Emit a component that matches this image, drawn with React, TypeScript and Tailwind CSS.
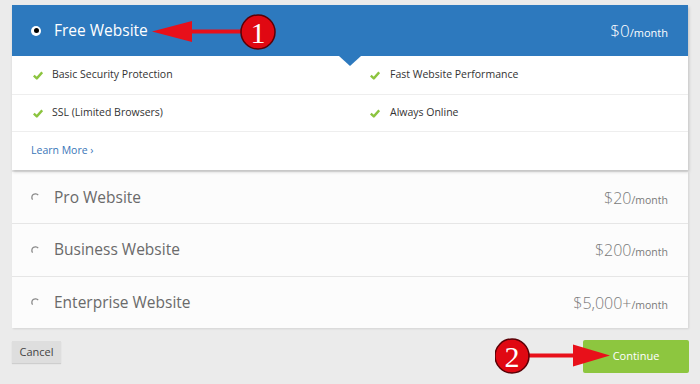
import React from 'react';

const FONT = { fontFamily: '"Open Sans", "Noto Sans", sans-serif' };

const Check: React.FC = () => (
  <svg width="10" height="9" viewBox="0 0 10 9" className="shrink-0">
    <path d="M0.8 4.6 L3.8 7.4 L9.2 1.4" fill="none" stroke="#8cc43f" strokeWidth="2.4" strokeLinejoin="round" />
  </svg>
);

const Radio: React.FC = () => (
  <svg width="9" height="9" viewBox="0 0 9 9" className="shrink-0">
    <path d="M7.2 2.2 A3.4 3.4 0 1 0 1.6 6.6" fill="none" stroke="#8a8a8a" strokeWidth="1.3" />
  </svg>
);

const Callout: React.FC<{ n: string; dir: 'left' | 'right'; className: string }> = ({ n, dir, className }) => (
  <svg width="140" height="40" viewBox="0 0 140 40" className={`absolute ${className}`}>
    {dir === 'left' ? (
      <g>
        <rect x="38" y="17.5" width="72" height="4" fill="#e8101a" />
        <polygon points="0,19.5 40,9 40,30" fill="#e8101a" />
        <circle cx="106" cy="20" r="17" fill="#e00812" stroke="#5a0006" strokeWidth="1.5" />
        <text x="106" y="31" textAnchor="middle" fill="#fff" fontSize="30" fontFamily='"Liberation Serif", serif'>{n}</text>
      </g>
    ) : (
      <g>
        <rect x="30" y="17.5" width="52" height="4" fill="#e8101a" />
        <polygon points="115,19.5 78,8.5 78,30.5" fill="#e8101a" />
        <circle cx="17" cy="20" r="17" fill="#e00812" stroke="#5a0006" strokeWidth="1.5" />
        <text x="17" y="31" textAnchor="middle" fill="#fff" fontSize="30" fontFamily='"Liberation Serif", serif'>{n}</text>
      </g>
    )}
  </svg>
);

const plans = [
  { name: 'Pro Website', price: '$20', h: 'h-[51px]' },
  { name: 'Business Website', price: '$200', h: 'h-[53px]' },
  { name: 'Enterprise Website', price: '$5,000+', h: 'h-[52px]' },
];

export default function App() {
  return (
    <div className="relative w-[700px] h-[384px] overflow-hidden bg-[#ebebeb] pt-[5px] px-[12px]" style={FONT}>
      {/* selected plan */}
      <div className="relative bg-white shadow-[1px_2px_3px_rgba(0,0,0,0.18)]">
        <div className="flex items-center h-[51px] bg-[#2d79be] pl-[19px] pr-[20px]">
          <span className="w-[10px] h-[10px] rounded-full bg-white flex items-center justify-center">
            <span className="w-[5px] h-[5px] rounded-full bg-black" />
          </span>
          <span className="ml-[13px] text-white text-[15.5px]">Free Website</span>
          <span className="ml-auto text-white">
            <span className="text-[17px] font-light">$0</span>
            <span className="text-[11px]">/month</span>
          </span>
        </div>
        <div className="absolute left-[327px] top-[51px] w-0 h-0 border-l-[11px] border-r-[11px] border-t-[10px] border-l-transparent border-r-transparent border-t-[#2d79be]" />
        <div className="grid grid-cols-2 text-[10.5px] text-[#333]">
          <div className="flex items-center gap-[9px] h-[39px] pl-[21px] border-b border-[#eeeeee]">
            <Check />
            <span>Basic Security Protection</span>
          </div>
          <div className="flex items-center gap-[10px] h-[39px] pl-[20px] border-b border-[#eeeeee]">
            <Check />
            <span>Fast Website Performance</span>
          </div>
          <div className="flex items-center gap-[9px] h-[37px] pl-[21px] border-b border-[#eeeeee]">
            <Check />
            <span>SSL (Limited Browsers)</span>
          </div>
          <div className="flex items-center gap-[10px] h-[37px] pl-[20px] border-b border-[#eeeeee]">
            <Check />
            <span>Always Online</span>
          </div>
        </div>
        <div className="flex items-center h-[38px] pl-[19px] text-[10.5px] text-[#3a76b8]">Learn More ›</div>
      </div>

      {/* other plans */}
      <div className="mt-[2px] bg-[#fcfcfc] shadow-[1px_1px_2px_rgba(0,0,0,0.1)]">
        {plans.map((p, i) => (
          <div
            key={p.name}
            className={`flex items-center ${p.h} pl-[19px] pr-[20px] ${i > 0 ? 'border-t border-[#e6e6e6]' : ''}`}
          >
            <Radio />
            <span className="ml-[14px] text-[15.5px] text-[#6a6a6a]">{p.name}</span>
            <span className="ml-auto text-[#7a7a7a]">
              <span className="text-[16px] font-light">{p.price}</span>
              <span className="text-[10.5px]">/month</span>
            </span>
          </div>
        ))}
      </div>

      <div className="flex items-start justify-between mt-[12px]">
        <button className="mt-[1px] w-[49px] h-[22px] bg-[#dedede] text-[11px] text-[#444] shadow-[0_1px_1px_rgba(0,0,0,0.12)]">
          Cancel
        </button>
        <button className="w-[106px] h-[33px] bg-[#8dc63f] text-[11px] text-white rounded-[2px] mr-[-1px]">
          Continue
        </button>
      </div>

      <Callout n="1" dir="left" className="left-[152px] top-[12px]" />
      <Callout n="2" dir="right" className="left-[495px] top-[336px]" />
    </div>
  );
}
